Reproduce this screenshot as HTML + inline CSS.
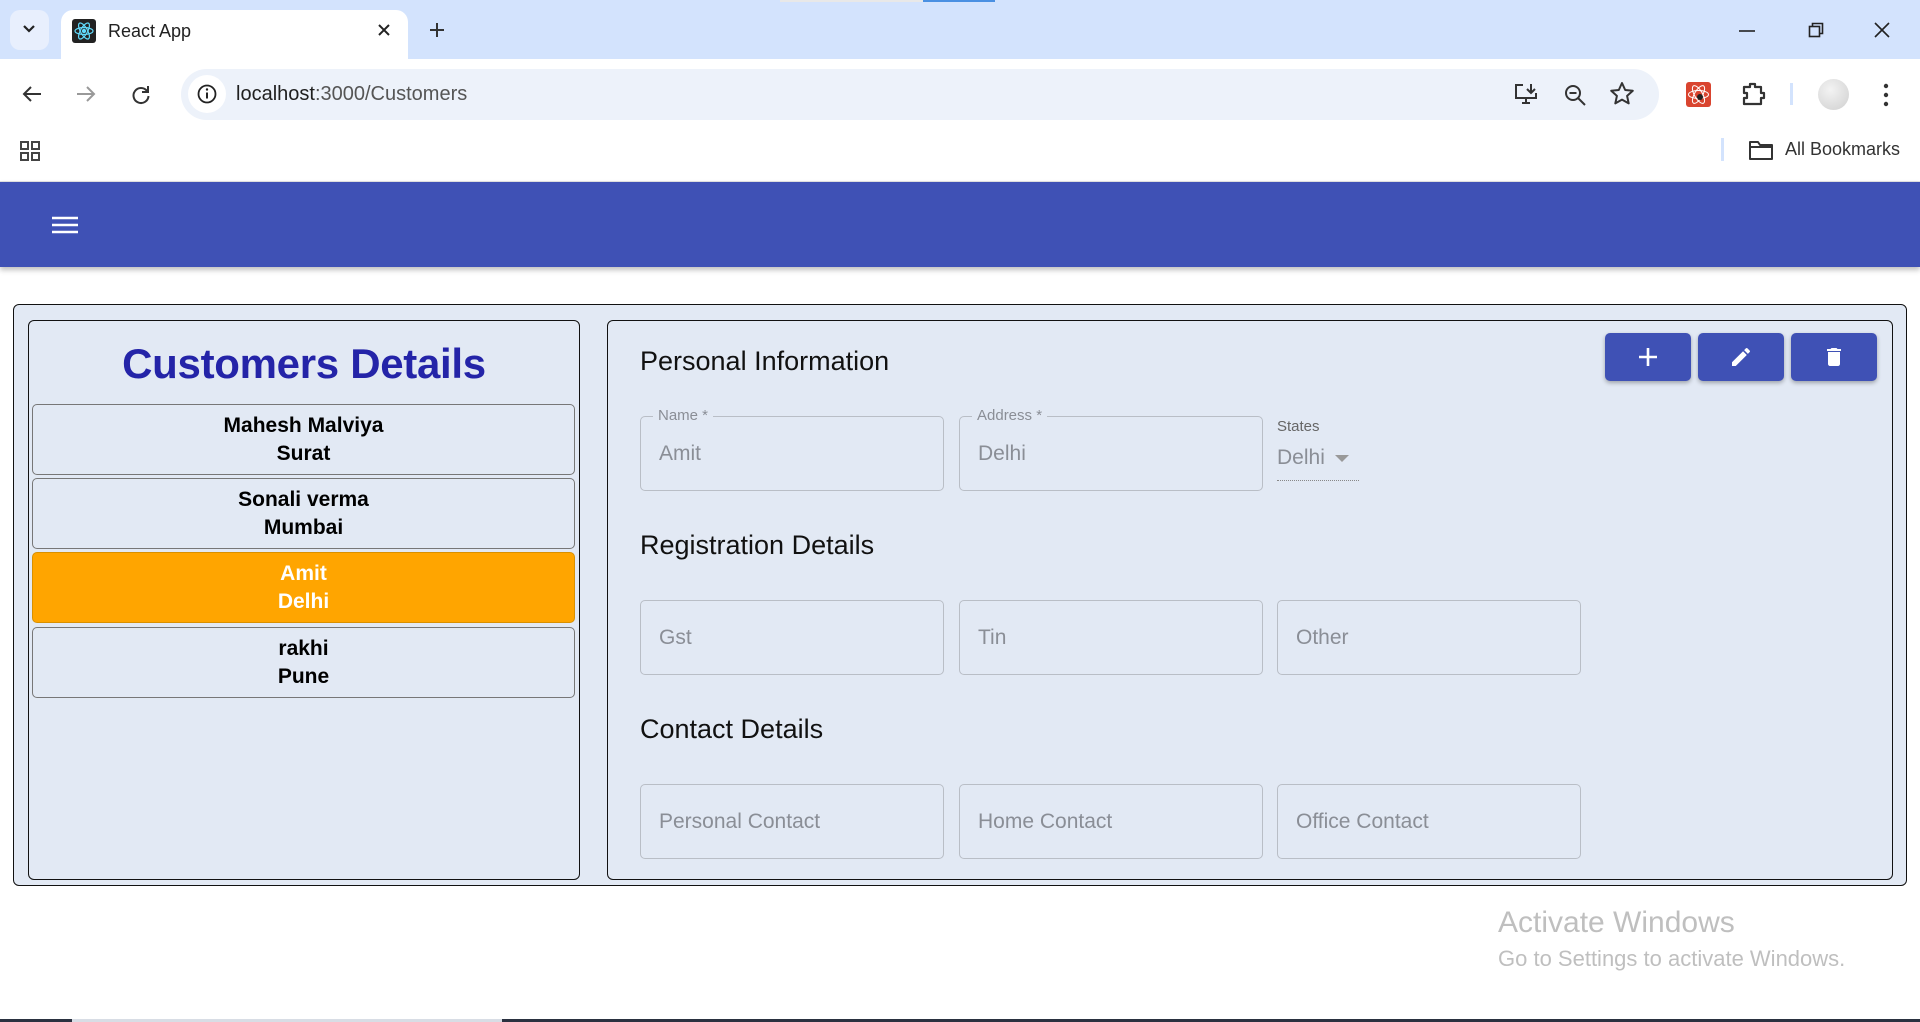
<!DOCTYPE html>
<html><head><meta charset="utf-8"><style>
*{box-sizing:border-box;margin:0;padding:0}
body{width:1920px;height:1022px;overflow:hidden;background:#fff;font-family:"Liberation Sans",sans-serif;position:relative}
.abs{position:absolute}
.tabstrip{left:0;top:0;width:1920px;height:59px;background:#d3e3fd}
.tab{left:61px;top:10px;width:347px;height:50px;background:#fff;border-radius:12px 12px 0 0}
.toolbar{left:0;top:59px;width:1920px;height:63px;background:#fff}
.omni{left:181px;top:69px;width:1478px;height:51px;background:#edf2fa;border-radius:26px}
.bm{left:0;top:122px;width:1920px;height:60px;background:#fff;border-bottom:1px solid #e3e3e3}
.appbar{left:0;top:182px;width:1920px;height:85px;background:#3f51b5;box-shadow:0 3px 5px rgba(0,0,0,.25)}
.outer{left:13px;top:304px;width:1894px;height:582px;background:#e2e9f4;border:1.5px solid #111;border-radius:6px}
.panel{background:#e2e9f4;border:1.5px solid #111;border-radius:6px}
.item{left:32px;width:543px;height:71px;border:1.5px solid #777;border-radius:5px;text-align:center;font-weight:bold;font-size:21px;line-height:28px;padding-top:7px;color:#000}
.sec{font-size:27px;color:#111;left:640px}
.inp{width:304px;height:75px;border:1px solid #b9bec6;border-radius:5px;font-size:21px;color:#8a8e96;padding:0 0 0 18px;display:flex;align-items:center}
.lbl{font-size:15px;color:#8a8e96;background:#e2e9f4;padding:0 5px;position:absolute;top:-10px;left:12px}
.btn{top:333px;width:86px;height:48px;background:#3f51b5;border-radius:5px;box-shadow:0 2px 4px rgba(0,0,0,.3);display:flex;align-items:center;justify-content:center}
svg{display:block}
</style></head><body>
<div class="abs tabstrip"></div>
<div class="abs" style="left:10px;top:10px;width:39px;height:40px;background:#e8effd;border-radius:10px"></div>
<svg class="abs" style="left:21px;top:23px" width="16" height="12"><path d="M3 3l5 5 5-5" stroke="#222" stroke-width="2.2" fill="none"/></svg>
<div class="abs tab"></div>
<div class="abs" style="left:72px;top:19px;width:24px;height:24px;background:#222;border-radius:3px"></div>
<svg class="abs" style="left:72px;top:19px" width="24" height="24" viewBox="0 0 24 24" fill="none" stroke="#61dafb" stroke-width="1.2"><ellipse cx="12" cy="12" rx="9" ry="3.5"/><ellipse cx="12" cy="12" rx="9" ry="3.5" transform="rotate(60 12 12)"/><ellipse cx="12" cy="12" rx="9" ry="3.5" transform="rotate(120 12 12)"/><circle cx="12" cy="12" r="1.6" fill="#61dafb"/></svg>
<div class="abs" style="left:108px;top:21px;font-size:18px;color:#222">React App</div>
<svg class="abs" style="left:377px;top:23px" width="14" height="14"><path d="M2 2l10 10M12 2L2 12" stroke="#222" stroke-width="2"/></svg>
<svg class="abs" style="left:428px;top:21px" width="18" height="18"><path d="M9 2v14M2 9h14" stroke="#333" stroke-width="2"/></svg>
<svg class="abs" style="left:1738px;top:29px" width="18" height="4"><path d="M1 2h16" stroke="#222" stroke-width="1.6"/></svg>
<svg class="abs" style="left:1808px;top:22px" width="16" height="16"><rect x="1.5" y="4.5" width="10" height="10" fill="none" stroke="#222" stroke-width="1.6"/><path d="M4.5 4.5V1.5h10v10h-3" fill="none" stroke="#222" stroke-width="1.6"/></svg>
<svg class="abs" style="left:1874px;top:22px" width="16" height="16"><path d="M1 1l14 14M15 1L1 15" stroke="#222" stroke-width="1.6"/></svg>
<div class="abs" style="left:780px;top:0;width:215px;height:2px;background:#e8e8e8"></div>
<div class="abs" style="left:923px;top:0;width:72px;height:2px;background:#4a90e2"></div>

<div class="abs toolbar"></div>
<svg class="abs" style="left:21px;top:84px" width="22" height="20"><path d="M20 10H3M10 3L3 10l7 7" stroke="#333" stroke-width="2" fill="none"/></svg>
<svg class="abs" style="left:75px;top:84px" width="22" height="20"><path d="M2 10h17M12 3l7 7-7 7" stroke="#999" stroke-width="2" fill="none"/></svg>
<svg class="abs" style="left:130px;top:84px" width="22" height="22"><path d="M17 7A7.5 7.5 0 1 0 18.5 12" stroke="#333" stroke-width="2" fill="none"/><path d="M18 2v6h-6" stroke="#333" stroke-width="2" fill="none"/></svg>
<div class="abs omni"></div>
<div class="abs" style="left:188px;top:75px;width:38px;height:38px;background:#fff;border-radius:50%"></div>
<svg class="abs" style="left:196px;top:83px" width="22" height="22"><circle cx="11" cy="11" r="8.5" fill="none" stroke="#222" stroke-width="1.8"/><path d="M11 9.5v6" stroke="#222" stroke-width="2"/><circle cx="11" cy="6.5" r="1.2" fill="#222"/></svg>
<div class="abs" style="left:236px;top:83px;font-size:20px;color:#1f1f1f">localhost<span style="color:#555">:3000/Customers</span></div>
<svg class="abs" style="left:1513px;top:82px" width="26" height="24" viewBox="0 0 26 24" fill="none" stroke="#333" stroke-width="2"><path d="M10 3H3v13h20V11"/><path d="M9 21h8M13 16v5M18 2v8M14 7l4 4 4-4"/></svg>
<svg class="abs" style="left:1563px;top:83px" width="24" height="24" fill="none" stroke="#333" stroke-width="2"><circle cx="10" cy="10" r="7"/><path d="M15 15l7 7M6.5 10h7"/></svg>
<svg class="abs" style="left:1609px;top:81px" width="26" height="26"><path d="M13 2l3.2 7 7.6.8-5.7 5.1 1.6 7.5L13 18.6 6.3 22.4l1.6-7.5L2.2 9.8 9.8 9z" fill="none" stroke="#333" stroke-width="2" stroke-linejoin="round"/></svg>
<div class="abs" style="left:1686px;top:82px;width:25px;height:25px;background:#d9442f;border-radius:3px"></div>
<svg class="abs" style="left:1686px;top:82px" width="25" height="25" fill="none" stroke="#fff" stroke-width="1"><ellipse cx="12.5" cy="12.5" rx="10" ry="4"/><ellipse cx="12.5" cy="12.5" rx="10" ry="4" transform="rotate(60 12.5 12.5)"/><ellipse cx="12.5" cy="12.5" rx="10" ry="4" transform="rotate(120 12.5 12.5)"/><circle cx="14" cy="15" r="3" fill="#222" stroke="none"/></svg>
<svg class="abs" style="left:1741px;top:81px" width="28" height="26" fill="none" stroke="#333" stroke-width="2.2" stroke-linejoin="round"><path d="M3 6h6V3h5v3h6v6h3v5h-3v6H3v-6h3v-5H3z"/></svg>
<div class="abs" style="left:1790px;top:83px;width:3px;height:22px;background:#d3e3fd"></div>
<div class="abs" style="left:1818px;top:79px;width:31px;height:31px;border-radius:50%;background:radial-gradient(circle at 40% 35%,#f3f3f3,#cfcfcf)"></div>
<svg class="abs" style="left:1882px;top:83px" width="8" height="24"><circle cx="4" cy="3" r="2.2" fill="#333"/><circle cx="4" cy="12" r="2.2" fill="#333"/><circle cx="4" cy="21" r="2.2" fill="#333"/></svg>

<div class="abs bm"></div>
<svg class="abs" style="left:19px;top:140px" width="22" height="22" fill="none" stroke="#444" stroke-width="2"><rect x="2" y="2" width="7" height="7"/><rect x="13" y="2" width="7" height="7"/><rect x="2" y="13" width="7" height="7"/><rect x="13" y="13" width="7" height="7"/></svg>
<div class="abs" style="left:1721px;top:138px;width:3px;height:23px;background:#d3e3fd"></div>
<svg class="abs" style="left:1748px;top:139px" width="26" height="22" fill="none" stroke="#333" stroke-width="2" stroke-linejoin="round"><path d="M2 3h8l2 3h12v14H2z"/><path d="M2 8h22"/></svg>
<div class="abs" style="left:1785px;top:139px;font-size:18px;color:#333">All Bookmarks</div>

<div class="abs appbar"></div>
<svg class="abs" style="left:52px;top:215px" width="26" height="20"><path d="M0 3h26M0 10h26M0 17h26" stroke="#fff" stroke-width="2.4"/></svg>

<div class="abs outer"></div>
<div class="abs panel" style="left:28px;top:320px;width:552px;height:560px"></div>
<div class="abs panel" style="left:607px;top:320px;width:1286px;height:560px"></div>

<div class="abs" style="left:28px;top:340px;width:552px;text-align:center;font-size:42px;font-weight:bold;color:#2424a8;letter-spacing:-0.3px">Customers Details</div>
<div class="abs item" style="top:404px">Mahesh Malviya<br>Surat</div>
<div class="abs item" style="top:478px">Sonali verma<br>Mumbai</div>
<div class="abs item" style="top:552px;background:#ffa500;color:#fff;border-color:#d99000">Amit<br>Delhi</div>
<div class="abs item" style="top:627px">rakhi<br>Pune</div>

<div class="abs sec" style="top:346px">Personal Information</div>
<div class="abs sec" style="top:530px">Registration Details</div>
<div class="abs sec" style="top:714px">Contact Details</div>

<div class="abs inp" style="left:640px;top:416px"><span class="lbl">Name *</span>Amit</div>
<div class="abs inp" style="left:959px;top:416px"><span class="lbl">Address *</span>Delhi</div>
<div class="abs" style="left:1277px;top:418px;font-size:15px;color:#666">States</div>
<div class="abs" style="left:1277px;top:446px;font-size:21px;color:#8a8e96">Delhi</div>
<svg class="abs" style="left:1335px;top:455px" width="14" height="8"><path d="M0 0h14L7 7z" fill="#999"/></svg>
<div class="abs" style="left:1277px;top:480px;width:82px;border-top:1px dotted #888"></div>

<div class="abs inp" style="left:640px;top:600px">Gst</div>
<div class="abs inp" style="left:959px;top:600px">Tin</div>
<div class="abs inp" style="left:1277px;top:600px">Other</div>
<div class="abs inp" style="left:640px;top:784px">Personal Contact</div>
<div class="abs inp" style="left:959px;top:784px">Home Contact</div>
<div class="abs inp" style="left:1277px;top:784px">Office Contact</div>

<div class="abs btn" style="left:1605px"><svg width="22" height="22"><path d="M11 2v18M2 11h18" stroke="#fff" stroke-width="2.6"/></svg></div>
<div class="abs btn" style="left:1698px"><svg width="24" height="24" viewBox="0 0 24 24"><path d="M3 17.25V21h3.75L17.81 9.94l-3.75-3.75zM20.71 7.04a1 1 0 0 0 0-1.41l-2.34-2.34a1 1 0 0 0-1.41 0l-1.83 1.83 3.75 3.75z" fill="#fff"/></svg></div>
<div class="abs btn" style="left:1791px"><svg width="24" height="24" viewBox="0 0 24 24"><path d="M6 19c0 1.1.9 2 2 2h8c1.1 0 2-.9 2-2V7H6zM19 4h-3.5l-1-1h-5l-1 1H5v2h14z" fill="#fff"/></svg></div>

<div class="abs" style="left:1498px;top:906px;font-size:30px;color:#bfbfbf">Activate Windows</div>
<div class="abs" style="left:1498px;top:946px;font-size:22px;color:#bfbfbf">Go to Settings to activate Windows.</div>
<div class="abs" style="left:0;top:1019px;width:1920px;height:3px;background:#2a3140"></div>
<div class="abs" style="left:72px;top:1019px;width:430px;height:3px;background:#d8dde5"></div>
</body></html>
